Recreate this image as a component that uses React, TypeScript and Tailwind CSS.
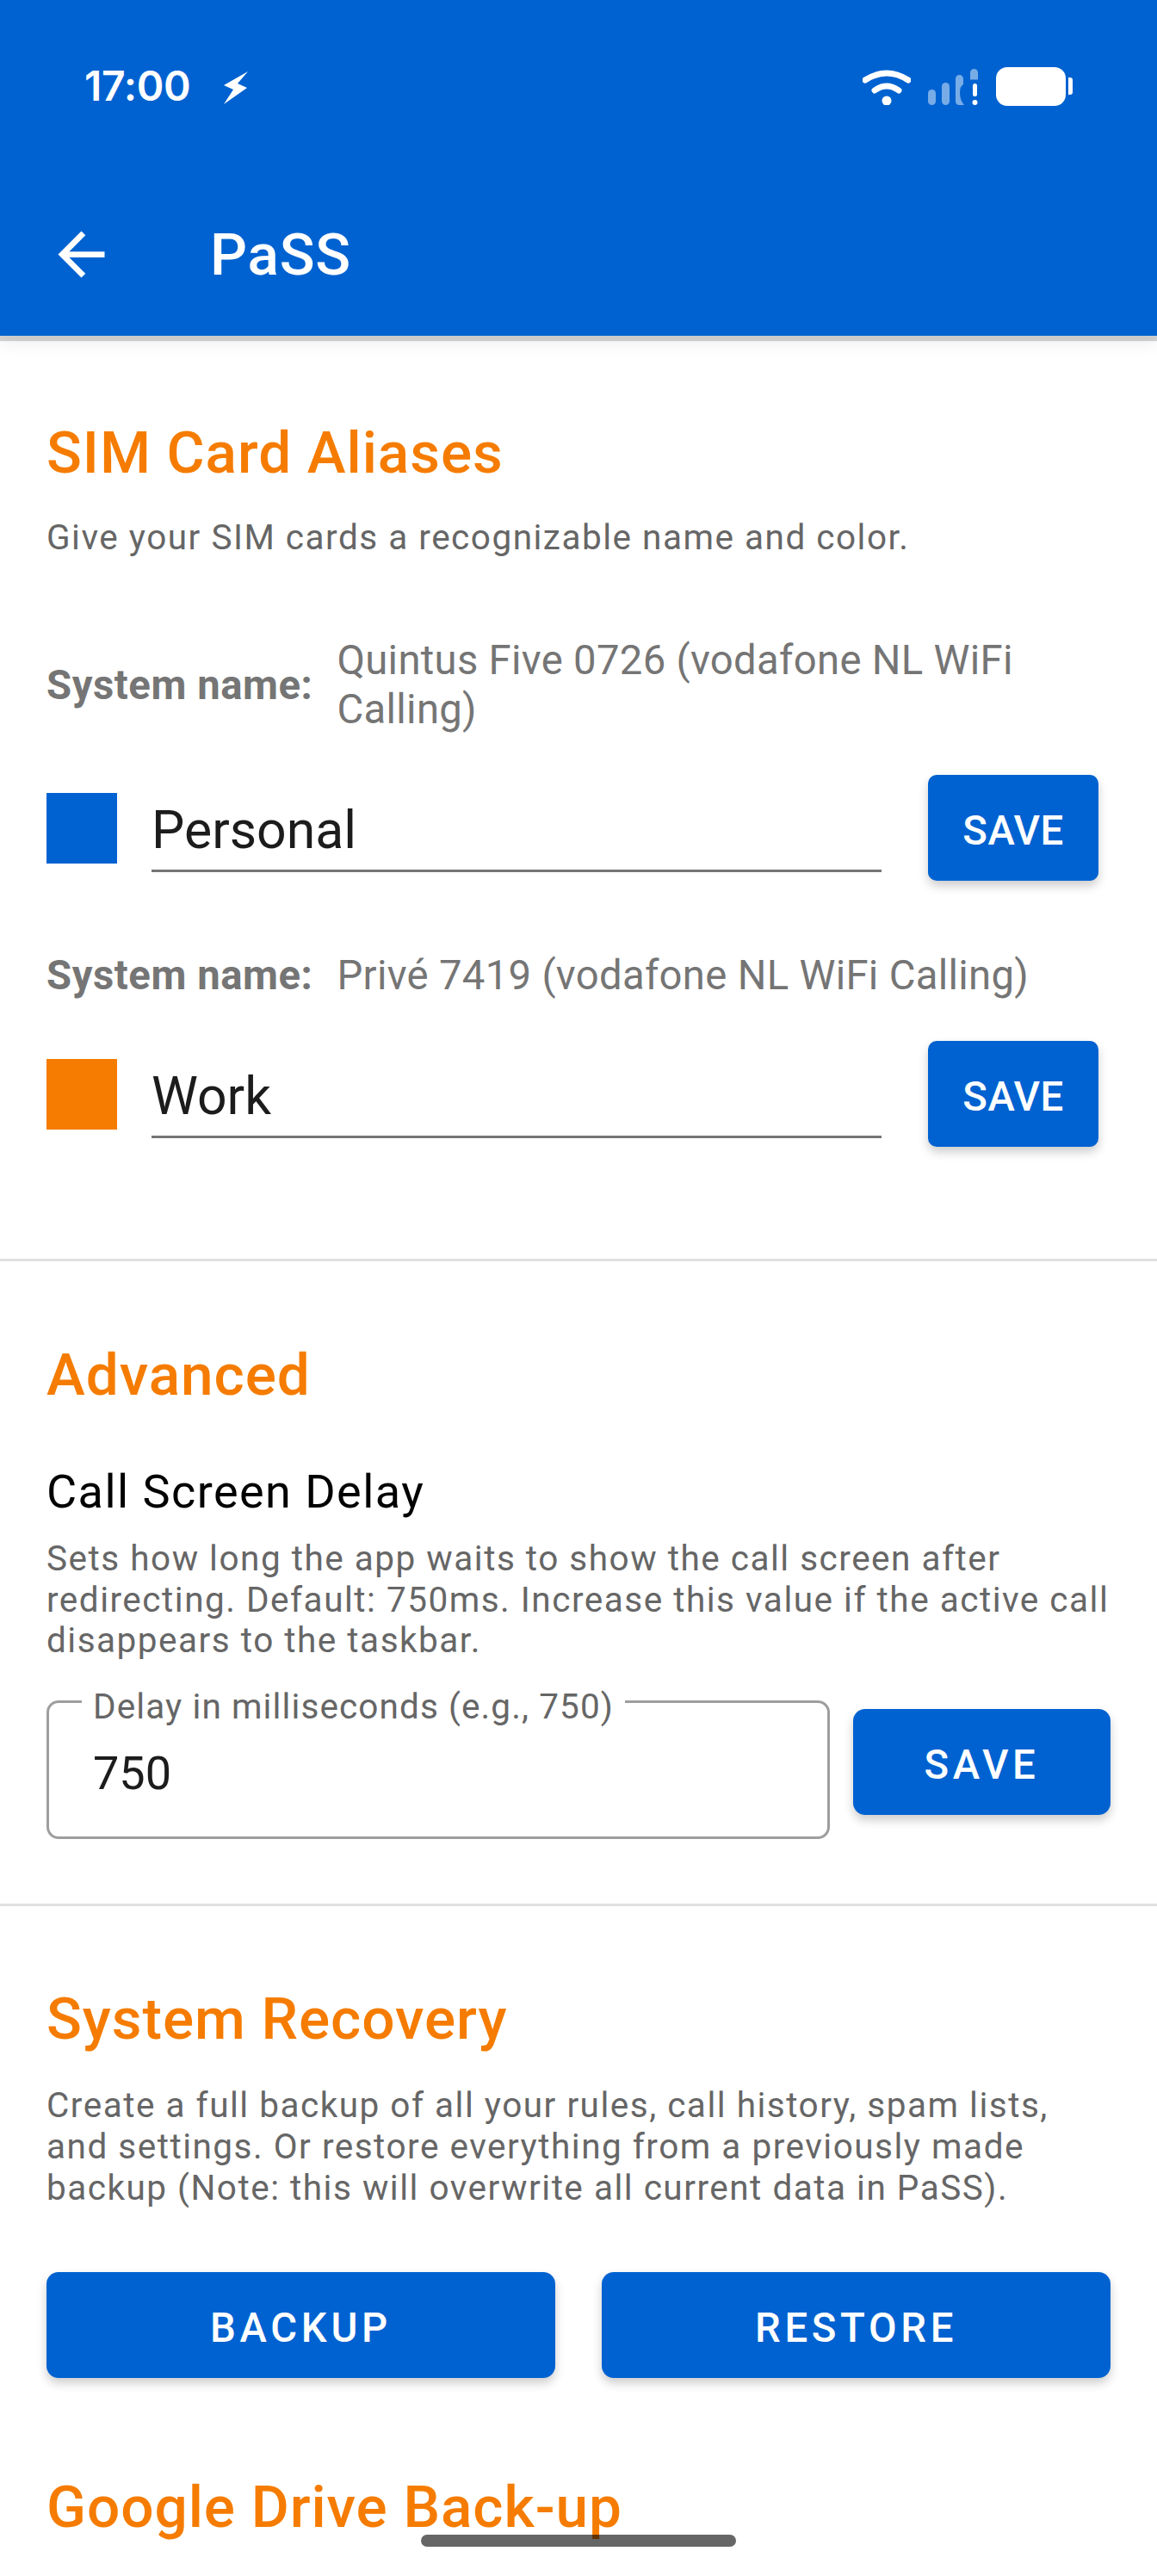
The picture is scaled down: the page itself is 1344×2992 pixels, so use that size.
import React from 'react';

const BLUE = 'bg-[#0062d1]';

const SectionTitle = ({ children }: { children: React.ReactNode }) => (
  <h2 className="text-[67.5px] leading-[68px] tracking-[0.95px] font-medium text-[#f57c00]">{children}</h2>
);

const Body = ({ children, className = '' }: { children: React.ReactNode; className?: string }) => (
  <p className={`text-[40.5px] leading-[47.7px] tracking-[1.5px] text-[#666666] ${className}`}>{children}</p>
);

const Button = ({ label, className = '' }: { label: string; className?: string }) => (
  <button className={`${BLUE} h-[123px] pt-[7px] flex items-center justify-center text-white font-medium text-[47.25px] shadow-[0_6px_12px_rgba(0,0,0,0.2)] ${className}`}>
    {label}
  </button>
);

const SystemName = ({ value }: { value: string }) => (
  <div className="flex items-center gap-[28px] text-[47.25px] leading-[57px] text-[#757575]">
    <span className="font-bold shrink-0 tracking-[0.55px]">System name:</span>
    <span className="flex-1 tracking-[0.3px]">{value}</span>
  </div>
);

const AliasRow = ({ color, name }: { color: string; name: string }) => (
  <div className="flex items-center mt-[47px]">
    <div className={`w-[82px] h-[82px] shrink-0 ${color}`} />
    <div className="flex-1 h-[102px] pt-[10px] ml-[40px] mr-[54px] border-b-[3px] border-[#757575] flex items-center text-[60.75px] leading-[60px] text-[#1c1c1c]">
      {name}
    </div>
    <Button label="SAVE" className="w-[198px] rounded-[10px] tracking-[0.6px]" />
  </div>
);

const Divider = () => <div className="h-[3px] bg-[#e0e0e0]" />;

const StatusIcons = () => (
  <div className="flex items-center">
    {/* wifi */}
    <svg width="56" height="42" viewBox="0 0 56 42" fill="none" className="mt-[1px]">
      <path d="M3 13 Q28 -3 53 13" stroke="#fff" strokeWidth="7" strokeLinecap="round" />
      <path d="M14 25 Q28 15 42 25" stroke="#fff" strokeWidth="7" strokeLinecap="round" />
      <circle cx="28" cy="37" r="5.5" fill="#fff" />
    </svg>
    {/* signal, no service */}
    <svg width="60" height="42" viewBox="0 0 60 42" className="ml-[19px] mt-[1px]">
      <g fill="#fff" fillOpacity="0.47">
        <rect x="1" y="24" width="9" height="18" rx="4.5" />
        <rect x="17" y="16" width="9" height="26" rx="4.5" />
        <path d="M33 11.5a4.5 4.5 0 0 1 9 0v6.5q-4 2-4 10t5 14h-5.5q-4.5 0-4.5-4.5z" />
        <path d="M50 4.5a4.5 4.5 0 0 1 9 0v8h-9z" />
      </g>
      <rect x="53" y="17" width="5" height="15" rx="2.5" fill="#fff" />
      <circle cx="55.5" cy="39" r="3" fill="#fff" />
    </svg>
    {/* battery */}
    <div className="ml-[20px] w-[81px] h-[45px] rounded-[13px] bg-white" />
    <div className="ml-[3px] w-[5px] h-[20px] rounded-r-[3px] bg-white" />
  </div>
);

export default function App() {
  return (
    <div className="relative h-[2992px] w-[1344px] overflow-hidden bg-white font-['Roboto',sans-serif]">
      <header className={`relative z-10 h-[390px] ${BLUE} text-white shadow-[0_6px_1px_rgba(0,0,0,0.17),0_12px_16px_rgba(0,0,0,0.05)]`}>
        <div className="h-[200px] pl-[98px] pr-[98px] flex items-center justify-between">
          <div className="flex items-center">
            <span className="font-['Inter',sans-serif] font-semibold text-[48px] leading-[48px] tracking-[-0.3px]">17:00</span>
            <svg width="28" height="38" viewBox="0 0 28 38" className="ml-[39px] mt-[4px]">
              <path d="M28 0 L0 16 L11 21 L0 38 L27 19 L16 14 Z" fill="#fff" />
            </svg>
          </div>
          <StatusIcons />
        </div>
        <div className="h-[190px] flex items-center pl-[54px]">
          <svg width="81" height="81" viewBox="0 0 24 24" fill="#fff">
            <path d="M20 11H7.83l5.59-5.59L12 4l-8 8 8 8 1.41-1.41L7.83 13H20v-2z" />
          </svg>
          <span className="ml-[109px] pt-[2px] text-[67.5px] leading-[70px] tracking-[0.8px] font-medium">PaSS</span>
        </div>
      </header>

      <main>
        <section className="pl-[54px] pr-[68px] pt-[102px] pb-[130px]">
          <SectionTitle>SIM Card Aliases</SectionTitle>
          <p className="mt-[37px] text-[40.5px] leading-[54px] tracking-[1.5px] text-[#666666]">
            Give your SIM cards a recognizable name and color.
          </p>
          <div className="mt-[88px]">
            <SystemName value="Quintus Five 0726 (vodafone NL WiFi Calling)" />
            <AliasRow color={BLUE} name="Personal" />
          </div>
          <div className="mt-[82px]">
            <SystemName value="Privé 7419 (vodafone NL WiFi Calling)" />
            <AliasRow color="bg-[#f57c00]" name="Work" />
          </div>
        </section>
        <Divider />

        <section className="px-[54px] pt-[98px] pb-[75px]">
          <SectionTitle>Advanced</SectionTitle>
          <h3 className="mt-[72px] text-[54px] leading-[60px] tracking-[1.45px] text-black">Call Screen Delay</h3>
          <Body className="mt-[24px]">
            Sets how long the app waits to show the call screen after redirecting. Default: 750ms. Increase this value if the active call disappears to the taskbar.
          </Body>
          <div className="mt-[45px] flex items-start gap-[27px]">
            <div className="relative flex-1 h-[161px] pt-[8px] rounded-[14px] border-[3px] border-[#9e9e9e] flex items-center pl-[51px] text-[54px] leading-[60px] text-[#1c1c1c]">
              <span className="absolute -top-[20px] left-[38px] h-[40px] bg-white px-[13px] text-[40.5px] leading-[48px] tracking-[1.1px] text-[#666666] whitespace-nowrap">
                Delay in milliseconds (e.g., 750)
              </span>
              750
            </div>
            <Button label="SAVE" className="w-[299px] mt-[10px] rounded-[14px] tracking-[4.7px]" />
          </div>
        </section>
        <Divider />

        <section className="px-[54px] pt-[97px]">
          <SectionTitle>System Recovery</SectionTitle>
          <Body className="mt-[43px]">
            Create a full backup of all your rules, call history, spam lists, and settings. Or restore everything from a previously made backup (Note: this will overwrite all current data in PaSS).
          </Body>
          <div className="mt-[74px] grid grid-cols-2 gap-[54px]">
            <Button label="BACKUP" className="rounded-[14px] tracking-[4.7px]" />
            <Button label="RESTORE" className="rounded-[14px] tracking-[4.7px]" />
          </div>
          <div className="mt-[116px]">
            <SectionTitle>Google Drive Back-up</SectionTitle>
          </div>
        </section>
      </main>

      {/* gesture pill */}
      <div className="absolute left-[489px] top-[2944px] w-[366px] h-[14px] rounded-full bg-black/60" />
    </div>
  );
}
